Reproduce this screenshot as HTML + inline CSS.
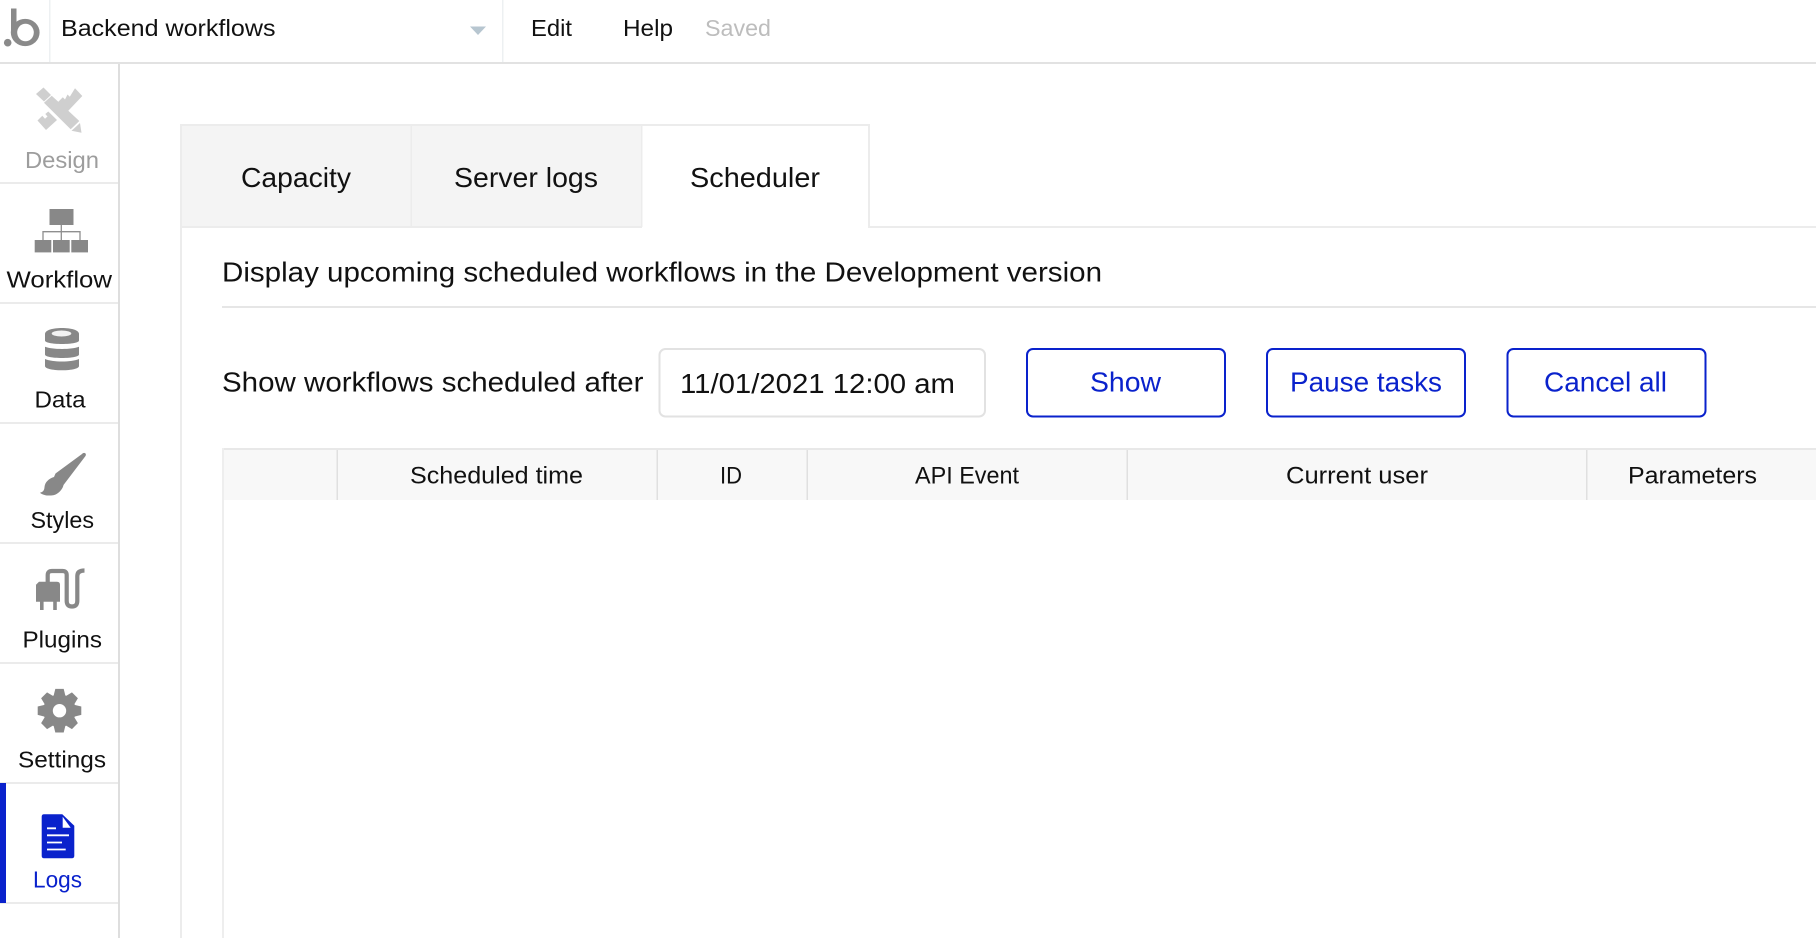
<!DOCTYPE html>
<html lang="en"><head><meta charset="utf-8"><title>Backend workflows - Logs</title>
<style>
html,body{margin:0;padding:0;background:#fff;width:1816px;height:938px;overflow:hidden}
svg{display:block}
text{font-family:"Liberation Sans",sans-serif;fill:#111}
.s{font-size:23.5px}
.t{font-size:27.5px}
.h{font-size:24px}
.b{font-size:28px;fill:#0a22cc}
</style></head><body>
<svg width="1816" height="938" viewBox="0 0 1816 938" xmlns="http://www.w3.org/2000/svg">
<rect width="1816" height="938" fill="#fff"/>
<!-- top bar -->
<rect x="0" y="62" width="1816" height="2" fill="#e2e2e2"/>
<rect x="49" y="0" width="1.5" height="62" fill="#edf0f2"/>
<rect x="502" y="0" width="1.5" height="62" fill="#edf0f2"/>
<circle cx="7.7" cy="42.7" r="3.8" fill="#8a8a8a"/>
<rect x="11" y="8.5" width="5.5" height="25" fill="#8a8a8a"/>
<ellipse cx="25.2" cy="32.5" rx="14.4" ry="13.6" fill="#8a8a8a"/>
<ellipse cx="25.5" cy="32.5" rx="8.3" ry="8.8" fill="#fff"/>
<text x="61" y="36" class="s" textLength="214.5" lengthAdjust="spacingAndGlyphs">Backend workflows</text>
<path d="M470 26.5H486L478 35Z" fill="#b7c6d0"/>
<text x="531" y="36" class="s" textLength="41" lengthAdjust="spacingAndGlyphs">Edit</text>
<text x="623" y="36" class="s" textLength="50" lengthAdjust="spacingAndGlyphs">Help</text>
<text x="705" y="36" class="s" textLength="66" lengthAdjust="spacingAndGlyphs" style="fill:#bdbdbd">Saved</text>
<!-- sidebar -->
<rect x="118" y="64" width="2" height="874" fill="#dedede"/>
<g fill="#ebebeb">
<rect x="0" y="182" width="118" height="2"/><rect x="0" y="302" width="118" height="2"/>
<rect x="0" y="422" width="118" height="2"/><rect x="0" y="542" width="118" height="2"/>
<rect x="0" y="662" width="118" height="2"/><rect x="0" y="782" width="118" height="2"/>
<rect x="0" y="902" width="118" height="2"/>
</g>
<rect x="0" y="783" width="6" height="120" fill="#0a22cc"/>
<!-- design icon -->
<g fill="#cfcfcf">
<path d="M36 94L43.5 87.5L51 95L44 101.5Z"/>
<path d="M44 102.7L51.7 95.7L58.3 101.7L62.8 97.2L65 99.5L67.5 94.5L69.8 96.8L75 88.3L82.3 96L68.3 110.7L79.3 121L70.7 129.3Z"/>
<path d="M37.5 120.5L42.3 115.7L45 118.8L47.5 116.5L45.3 114L48.3 111.5L57 120L46 130Z"/>
<path d="M80 123L81.5 132.8L71.5 130.8Z"/>
</g>
<text x="25" y="168" class="s" textLength="74" lengthAdjust="spacingAndGlyphs" style="fill:#9d9d9d">Design</text>
<!-- workflow icon -->
<g fill="#888">
<rect x="49.5" y="209" width="24" height="16"/>
<rect x="34.7" y="240" width="16.6" height="12.4"/>
<rect x="53" y="240" width="16.7" height="12.4"/>
<rect x="71.3" y="240" width="16.7" height="12.4"/>
</g>
<path d="M61.3 225V240M43 240V231.7H80V240" stroke="#8f8f8f" stroke-width="1.3" fill="none"/>
<text x="6.5" y="287.5" class="s" textLength="105.5" lengthAdjust="spacingAndGlyphs">Workflow</text>
<!-- data icon -->
<g fill="#888">
<path d="M45 334C45 330 53 328 62 328S79 330 79 334V340.5C79 342.5 72 344 62 344S45 342.5 45 340.5Z"/>
<path d="M45 346.8C49 348.3 55 349 62 349S75 348.3 79 346.8V354.5C79 356.5 72 358 62 358S45 356.5 45 354.5Z"/>
<path d="M45 359C49 360.7 55 361.5 62 361.5S75 360.7 79 359V366C79 368.5 72 370.3 62 370.3S45 368.5 45 366Z"/>
</g>
<ellipse cx="61.5" cy="333.5" rx="9.8" ry="3" fill="#f2f2f2"/>
<text x="34.5" y="407.5" class="s" textLength="51" lengthAdjust="spacingAndGlyphs">Data</text>
<!-- brush icon -->
<path fill="#888" d="M82 454C84 451.5 87 453.5 85.5 456L63.5 485C62.5 490 57 495.5 51 495.5C47 495.8 42.5 495 40 492.7C43 492 44.3 490.5 44.5 487C45 482 49 478.5 54 477L55.5 473.5Z"/>
<text x="30.5" y="527.8" class="s" textLength="63.5" lengthAdjust="spacingAndGlyphs">Styles</text>
<!-- plugin icon -->
<g fill="#888">
<path d="M39 581.7H57Q60 581.7 60 584.7V601.7H36V584.7Z"/>
<rect x="40" y="600" width="3.6" height="10"/>
<rect x="53.2" y="600" width="3.6" height="10"/>
</g>
<path d="M47.7 583V575Q47.7 571 52 571H62.5Q66.7 571 66.7 575V601Q66.7 606.5 72 606.5T77.3 601V576Q77.3 570.5 84.5 570.5" stroke="#888" stroke-width="4.2" fill="none"/>
<text x="22.5" y="647.5" class="s" textLength="79.5" lengthAdjust="spacingAndGlyphs">Plugins</text>
<!-- gear -->
<g fill="#888" transform="translate(59.5 710.7)">
<circle r="11.5" fill="none" stroke="#888" stroke-width="9.6"/>
<g><path d="M-6-14.5L-4.2-21.8H4.2L6-14.5Z"/><path d="M-6 14.5L-4.2 21.8H4.2L6 14.5Z"/><path d="M-14.5-6L-21.8-4.2V4.2L-14.5 6Z"/><path d="M14.5-6L21.8-4.2V4.2L14.5 6Z"/></g>
<g transform="rotate(45)"><path d="M-6-14.5L-4.2-21.8H4.2L6-14.5Z"/><path d="M-6 14.5L-4.2 21.8H4.2L6 14.5Z"/><path d="M-14.5-6L-21.8-4.2V4.2L-14.5 6Z"/><path d="M14.5-6L21.8-4.2V4.2L14.5 6Z"/></g>
</g>
<text x="18" y="767.5" class="s" textLength="88" lengthAdjust="spacingAndGlyphs">Settings</text>
<!-- logs icon -->
<path d="M44 814.3H62.3L74.3 825.7V855.8Q74.3 858.3 71.8 858.3H44Q41.7 858.3 41.7 855.8V816.8Q41.7 814.3 44 814.3Z" fill="#0a22cc"/>
<path d="M62.7 816.7L70.7 827.7H62.7Z" fill="#fff"/>
<path d="M47 828.3H56M47 835.3H69M47 842.5H62M47 849.5H65.7" stroke="#fff" stroke-width="1.8" fill="none"/>
<text x="33" y="887.5" class="s" textLength="49" lengthAdjust="spacingAndGlyphs" style="fill:#0a22cc">Logs</text>
<!-- tabs -->
<rect x="180" y="124" width="461" height="103" fill="#f4f4f4"/>
<rect x="180" y="124" width="690" height="2" fill="#ececec"/>
<rect x="180" y="124" width="2" height="814" fill="#ececec"/>
<rect x="410.5" y="124" width="1.5" height="103" fill="#ececec"/>
<rect x="641" y="124" width="1.5" height="103" fill="#ececec"/>
<rect x="868" y="124" width="2" height="104" fill="#ececec"/>
<rect x="180" y="226" width="462" height="2" fill="#ececec"/>
<rect x="868" y="226" width="948" height="2" fill="#ececec"/>
<text x="241" y="187" class="t" textLength="110" lengthAdjust="spacingAndGlyphs">Capacity</text>
<text x="454" y="187" class="t" textLength="144" lengthAdjust="spacingAndGlyphs">Server logs</text>
<text x="690" y="187" class="t" textLength="130" lengthAdjust="spacingAndGlyphs">Scheduler</text>
<!-- content -->
<text x="222" y="281.7" class="t" textLength="880" lengthAdjust="spacingAndGlyphs">Display upcoming scheduled workflows in the Development version</text>
<rect x="222" y="306" width="1594" height="2" fill="#e6e6e6"/>
<text x="222" y="391.7" class="t" textLength="421.5" lengthAdjust="spacingAndGlyphs">Show workflows scheduled after</text>
<rect x="659.5" y="349" width="325.5" height="67.5" rx="6" fill="#fff" stroke="#e2e2e2" stroke-width="2"/>
<text x="680" y="393" class="t" style="font-size:28px" textLength="275" lengthAdjust="spacingAndGlyphs">11/01/2021 12:00 am</text>
<g fill="#fff" stroke="#0a22cc" stroke-width="2">
<rect x="1027" y="349" width="198" height="67.5" rx="6"/>
<rect x="1267" y="349" width="198" height="67.5" rx="6"/>
<rect x="1507.5" y="349" width="198" height="67.5" rx="6"/>
</g>
<text x="1090" y="391.7" class="b" textLength="71" lengthAdjust="spacingAndGlyphs">Show</text>
<text x="1290" y="391.7" class="b" textLength="152" lengthAdjust="spacingAndGlyphs">Pause tasks</text>
<text x="1544" y="391.7" class="b" textLength="123" lengthAdjust="spacingAndGlyphs">Cancel all</text>
<!-- table -->
<rect x="224" y="450" width="1592" height="50" fill="#f8f8f8"/>
<rect x="222" y="448" width="1594" height="2" fill="#e8e8e8"/>
<rect x="222" y="448" width="2" height="490" fill="#eeeeee"/>
<g fill="#e0e0e0">
<rect x="336.5" y="450" width="1.5" height="50"/><rect x="656.5" y="450" width="1.5" height="50"/>
<rect x="806.5" y="450" width="1.5" height="50"/><rect x="1126.5" y="450" width="1.5" height="50"/>
<rect x="1586" y="450" width="1.5" height="50"/>
</g>
<text x="410" y="483.5" class="h" textLength="173" lengthAdjust="spacingAndGlyphs">Scheduled time</text>
<text x="720" y="483.5" class="h" textLength="22" lengthAdjust="spacingAndGlyphs">ID</text>
<text x="915" y="483.5" class="h" textLength="104" lengthAdjust="spacingAndGlyphs">API Event</text>
<text x="1286" y="483.5" class="h" textLength="142" lengthAdjust="spacingAndGlyphs">Current user</text>
<text x="1628" y="483.5" class="h" textLength="129" lengthAdjust="spacingAndGlyphs">Parameters</text>
</svg>
</body></html>
